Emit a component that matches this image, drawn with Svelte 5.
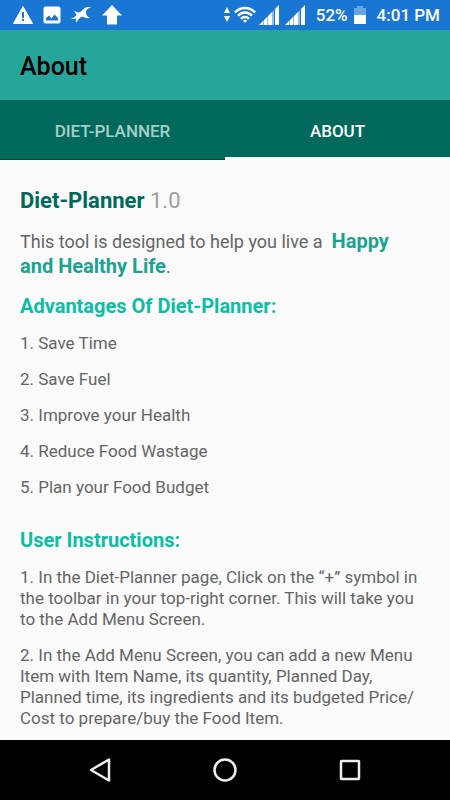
<script lang="ts">
  type Tab = 'planner' | 'about';

  const tabs: { id: Tab; label: string }[] = [
    { id: 'planner', label: 'Diet-Planner' },
    { id: 'about', label: 'About' },
  ];

  const advantages = [
    'Save Time',
    'Save Fuel',
    'Improve your Health',
    'Reduce Food Wastage',
    'Plan your Food Budget',
  ];

  // The zero-width space lets "Price/Cost" break after the slash.
  const instructions = [
    'In the Diet-Planner page, Click on the “+” symbol in the toolbar in your top-right corner. This will take you to the Add Menu Screen.',
    'In the Add Menu Screen, you can add a new Menu Item with Item Name, its quantity, Planned Day, Planned time, its ingredients and its budgeted Price/\u200bCost to prepare/buy the Food Item.',
  ];

  let active = $state<Tab>('about');
</script>

{#snippet signal()}
  <svg class="signal" width="20" height="20" viewBox="0 0 20 20" aria-hidden="true">
    <path d="M0 20 4 16V20zM5 15 8 12V20H5zM9 11 12 8V20H9z" fill="#fff" />
    <path d="M4 16 5 15V20H4zM8 12 9 11V20H8zM13 7 15 5V20H13z" fill="#8fbcec" />
    <path d="M12 8 13 7V20H12zM16 4 20 0V20H16z" fill="#fff" />
  </svg>
{/snippet}

<div class="screen">
  <div class="status">
    <div class="notices">
      <svg width="20" height="18" viewBox="0 0 20 18" aria-hidden="true">
        <path d="M10 .5 19.5 17.5H.5z" fill="#fff" stroke="#fff" stroke-linejoin="round" />
        <path d="M9 6h2v6H9zM9 13h2v2H9z" fill="#1976d2" />
      </svg>
      <svg width="18" height="18" viewBox="0 0 18 18" aria-hidden="true">
        <rect x=".5" y=".5" width="17" height="17" rx="2" fill="#fff" />
        <path d="M3 14.500V12L6 9.500 8.500 12.500 11.500 8.500 15 12V14.500z" fill="#1976d2" />
      </svg>
      <svg width="20" height="18" viewBox="0 0 20 18" aria-hidden="true">
        <path
          d="M0 12.500C3.500 11.500 5 10 5.500 8.500L3 5 7.500 6.500C9 6.500 10.500 5 11.500 4 13.500 1.500 17 .5 20 1.500 16.500 2 15.500 4 15 6 14.800 8.500 16 10.500 19 12 15.500 12.500 12.500 11.500 11 10.500 9.500 11.500 7.500 12.500 5 17 4.500 14.500 5 13 5.500 12 4 13 2 13.200 0 12.500z"
          fill="#fff"
        />
      </svg>
      <svg width="22" height="20" viewBox="0 0 22 20" aria-hidden="true">
        <path d="M11 0 21 10.500H16V19.500H6V10.500H1z" fill="#fff" />
      </svg>
    </div>
    <div class="system">
      <svg width="8" height="16" viewBox="0 0 8 16" aria-hidden="true">
        <path d="M4 0 7 6H1zM1 9H7L4 15z" fill="#fff" />
      </svg>
      <svg class="wifi" width="22" height="18" viewBox="0 0 22 18" aria-hidden="true">
        <g fill="none" stroke="#fff" stroke-width="2.500">
          <path d="M1 6.500C6.500 .5 15.500 .5 21 6.500" />
          <path d="M4 9.700C8 5.400 14 5.400 18 9.700" />
          <path d="M7 12.800C9.400 10.300 12.600 10.300 15 12.800" />
        </g>
        <path d="M8.800 14.500Q11 12.800 13.200 14.500L11 17z" fill="#fff" />
      </svg>
      {@render signal()}
      {@render signal()}
      <span class="percent">52%</span>
      <svg class="battery" width="12" height="18" viewBox="0 0 12 18" aria-hidden="true">
        <path d="M3 0H9V2H12V10H0V2H3z" fill="#67a5e3" />
        <path d="M0 9H12V17Q12 18 11 18H1Q0 18 0 17z" fill="#fff" />
      </svg>
      <span>4:01 PM</span>
    </div>
  </div>

  <header class="toolbar">
    <h1>About</h1>
  </header>

  <div class="tabs" role="tablist">
    {#each tabs as tab (tab.id)}
      <button
        type="button"
        role="tab"
        class="tab"
        class:active={active === tab.id}
        aria-selected={active === tab.id}
        onclick={() => (active = tab.id)}>{tab.label}</button
      >
    {/each}
  </div>

  <main>
    <h2>Diet-Planner <span class="version">1.0</span></h2>
    <p class="intro">
      This tool is designed to help you live a&nbsp; <strong>Happy<br />and Healthy Life</strong>.
    </p>

    <h3>Advantages Of Diet-Planner:</h3>
    {#each advantages as item, i}
      <p>{i + 1}. {item}</p>
    {/each}

    <h3 class="later">User Instructions:</h3>
    {#each instructions as item, i}
      <p>{i + 1}. {item}</p>
    {/each}
  </main>

  <nav class="navbar" aria-label="System navigation">
    <button type="button" aria-label="Back">
      <svg width="24" height="26" viewBox="0 0 24 26">
        <path d="M21 2.500V23.500L3 13z" />
      </svg>
    </button>
    <button type="button" aria-label="Home">
      <svg width="26" height="26" viewBox="0 0 26 26">
        <circle cx="13" cy="13" r="10.500" />
      </svg>
    </button>
    <button type="button" aria-label="Recent apps">
      <svg width="24" height="24" viewBox="0 0 24 24">
        <rect x="3" y="3" width="18" height="18" rx=".5" />
      </svg>
    </button>
  </nav>
</div>

<style>
  :global(body) {
    margin: 0;
    background: #fafafa;
  }
  .screen {
    display: flex;
    flex-direction: column;
    min-height: 100vh;
    background: #fafafa;
    color: #656565;
    font-family: Roboto, sans-serif;
    font-size: 17px;
    line-height: 21px;
  }

  /* Status bar */
  .status {
    display: flex;
    align-items: center;
    justify-content: space-between;
    height: 30px;
    padding: 0 10px 0 13px;
    background: #1976d2;
    color: #fff;
    font-weight: 500;
  }
  .notices,
  .system {
    display: flex;
    align-items: center;
  }
  .notices {
    gap: 10px;
  }
  .wifi {
    margin: 0 3px;
  }
  .signal {
    margin-right: 6px;
  }
  .percent {
    margin-left: 5px;
  }
  .battery {
    margin: 0 11px 0 6px;
  }

  .toolbar {
    display: flex;
    align-items: center;
    height: 70px;
    padding: 4px 20px 0;
    box-sizing: border-box;
    background: #26a69a;
  }
  h1 {
    margin: 0;
    color: #000;
    font-size: 25px;
    font-weight: 500;
    line-height: 30px;
  }

  .tabs {
    display: flex;
    height: 60px;
    background: #00695c;
  }
  .tab {
    flex: 1;
    padding: 3px 0 0;
    border: 0;
    border-bottom: 1px solid #004d40;
    background: none;
    color: #a9cdc8;
    font: 500 17px/20px Roboto, sans-serif;
    text-transform: uppercase;
    cursor: pointer;
  }
  .tab.active {
    padding-top: 5px;
    border-bottom: 3px solid #fff;
    color: #fff;
  }

  main {
    flex: 1;
    padding: 27px 24px 10px 20px;
  }
  h2 {
    margin: 0 0 15px;
    color: #00695c;
    font-size: 22px;
    font-weight: 700;
    line-height: 27px;
  }
  .version {
    color: #9e9e9e;
    font-weight: 400;
  }
  p {
    margin: 0 0 15px;
  }
  p:last-child {
    margin-bottom: 0;
  }
  .intro {
    font-size: 18px;
    line-height: 24px;
  }
  strong {
    color: #1aa391;
    font-size: 20px;
  }
  h3 {
    margin: 0 0 15px;
    color: #0abfa4;
    font-size: 20px;
    font-weight: 700;
    line-height: 24px;
  }
  .later {
    margin-top: 30px;
  }

  .navbar {
    display: flex;
    height: 60px;
    padding: 0 37px;
    background: #000;
  }
  .navbar button {
    display: flex;
    flex: 1;
    align-items: center;
    justify-content: center;
    padding: 0;
    border: 0;
    background: none;
    cursor: pointer;
  }
  .navbar svg {
    fill: none;
    stroke: #eee;
    stroke-width: 2.5;
    stroke-linejoin: round;
  }
</style>
